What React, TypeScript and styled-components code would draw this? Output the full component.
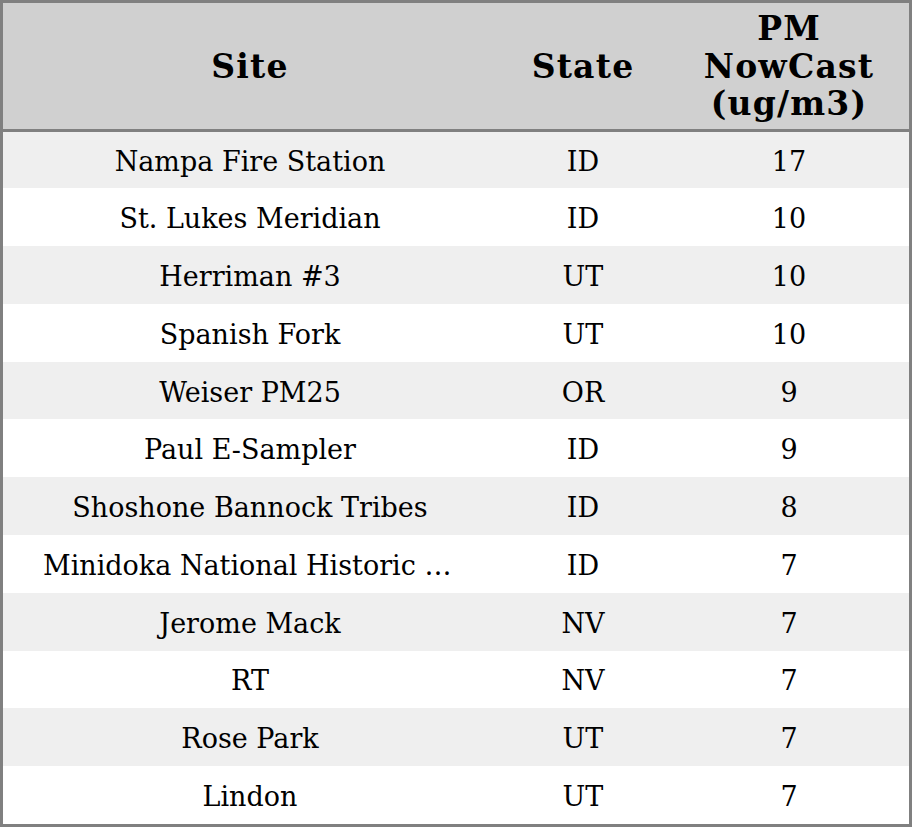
import React from "react";
import styled, {createGlobalStyle} from "styled-components";

const GlobalStyle = createGlobalStyle`
  html, body {
    margin: 0;
    padding: 0;
    background: #ffffff;
  }
`;

const Frame = styled.div`
  box-sizing: border-box;
  width: 912px;
  height: 827px;
  border: 3px solid #808080;
  overflow: hidden;
`;

const Table = styled.table`
  width: 100%;
  height: 100%;
  border-collapse: collapse;
  table-layout: fixed;
  font-family: "DejaVu Serif", serif;
  color: #000;
`;

const HeadCell = styled.th<{ $width: number }>`
  width: ${(p) => p.$width}px;
  height: 125px;
  padding: 1px 0 0;
  background: #d0d0d0;
  border-bottom: 3px solid #808080;
  font-size: 33px;
  font-weight: bold;
  letter-spacing: 1.2px;
  line-height: 37.5px;
  text-align: center;
  vertical-align: middle;
`;

const Row = styled.tr<{ $odd: boolean }>`
  height: 57.75px;
  background: ${(p) => (p.$odd ? "#efefef" : "#ffffff")};
`;

const Cell = styled.td`
  padding: 3px 40px 0;
  font-size: 27px;
  text-align: center;
  vertical-align: middle;
  white-space: nowrap;
  overflow: hidden;
  text-overflow: ellipsis;
`;

const rows: [string, string, number][] = [
    ["Nampa Fire Station", "ID", 17],
    ["St. Lukes Meridian", "ID", 10],
    ["Herriman #3", "UT", 10],
    ["Spanish Fork", "UT", 10],
    ["Weiser PM25", "OR", 9],
    ["Paul E-Sampler", "ID", 9],
    ["Shoshone Bannock Tribes", "ID", 8],
    ["Minidoka National Historic Site", "ID", 7],
    ["Jerome Mack", "NV", 7],
    ["RT", "NV", 7],
    ["Rose Park", "UT", 7],
    ["Lindon", "UT", 7],
];

export default function App() {
    return (
        <>
            <GlobalStyle/>
            <Frame>
                <Table>
                    <thead>
                    <tr>
                        <HeadCell $width={494}>Site</HeadCell>
                        <HeadCell $width={172}>State</HeadCell>
                        <HeadCell $width={240}>PM<br/>NowCast<br/>(ug/m3)</HeadCell>
                    </tr>
                    </thead>
                    <tbody>
                    {rows.map(([site, state, pm], idx) => (
                        <Row key={idx} $odd={idx % 2 === 0}>
                            <Cell>{site}</Cell>
                            <Cell>{state}</Cell>
                            <Cell>{pm}</Cell>
                        </Row>
                    ))}
                    </tbody>
                </Table>
            </Frame>
        </>
    );
}
